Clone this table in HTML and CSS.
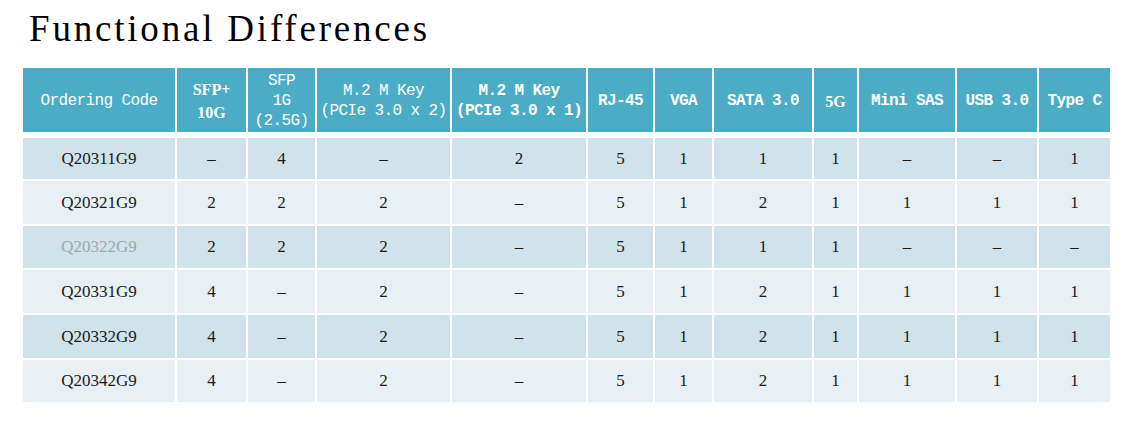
FILE: index.html
```html
<!DOCTYPE html>
<html>
<head>
<meta charset="utf-8">
<link rel="stylesheet" href="styles.css">
</head>
<body>
<h1 class="title">Functional Differences</h1>
<table class="spec">
  <colgroup>
    <col style="width:152px"><col style="width:69px"><col style="width:67px"><col style="width:133px"><col style="width:134px"><col style="width:65px"><col style="width:57px"><col style="width:98px"><col style="width:43px"><col style="width:96px"><col style="width:80px"><col style="width:71px">
  </colgroup>
  <thead>
    <tr>
      <th>Ordering Code</th>
      <th class="tb">SFP+<br>10G</th>
      <th>SFP<br>1G<br>(2.5G)</th>
      <th>M.2 M Key<br>(PCIe 3.0 x 2)</th>
      <th class="mb">M.2 M Key<br>(PCIe 3.0 x 1)</th>
      <th class="mb">RJ-45</th>
      <th class="mb">VGA</th>
      <th class="mb">SATA 3.0</th>
      <th class="tb">5G</th>
      <th class="mb">Mini SAS</th>
      <th class="mb">USB 3.0</th>
      <th class="mb">Type C</th>
    </tr>
  </thead>
  <tbody>
    <tr><td>Q20311G9</td><td>–</td><td>4</td><td>–</td><td>2</td><td>5</td><td>1</td><td>1</td><td>1</td><td>–</td><td>–</td><td>1</td></tr>
    <tr><td>Q20321G9</td><td>2</td><td>2</td><td>2</td><td>–</td><td>5</td><td>1</td><td>2</td><td>1</td><td>1</td><td>1</td><td>1</td></tr>
    <tr><td class="muted">Q20322G9</td><td>2</td><td>2</td><td>2</td><td>–</td><td>5</td><td>1</td><td>1</td><td>1</td><td>–</td><td>–</td><td>–</td></tr>
    <tr><td>Q20331G9</td><td>4</td><td>–</td><td>2</td><td>–</td><td>5</td><td>1</td><td>2</td><td>1</td><td>1</td><td>1</td><td>1</td></tr>
    <tr><td>Q20332G9</td><td>4</td><td>–</td><td>2</td><td>–</td><td>5</td><td>1</td><td>2</td><td>1</td><td>1</td><td>1</td><td>1</td></tr>
    <tr><td>Q20342G9</td><td>4</td><td>–</td><td>2</td><td>–</td><td>5</td><td>1</td><td>2</td><td>1</td><td>1</td><td>1</td><td>1</td></tr>
  </tbody>
</table>
</body>
</html>
```
FILE: styles.css
```css
html, body {
  margin: 0;
  padding: 0;
  background: #ffffff;
}
body {
  font-family: "Liberation Serif", serif;
  color: #111;
}
.title {
  margin: 0;
  padding: 9px 0 0 29px;
  height: 66px;
  box-sizing: border-box;
  font-family: "Liberation Serif", serif;
  font-weight: normal;
  font-size: 37px;
  line-height: 40px;
  letter-spacing: 2.8px;
  color: #000;
}
.spec {
  margin-left: 21px;
  border-collapse: separate;
  border-spacing: 2px;
  table-layout: fixed;
  width: 1091px;
}
.spec th {
  background: #4bacc6;
  color: #fff;
  font-family: "Liberation Mono", monospace;
  font-weight: normal;
  font-size: 16px;
  letter-spacing: -0.6px;
  line-height: 20px;
  height: 62px;
  padding: 2px 0 0;
  text-align: center;
  vertical-align: middle;
  border-bottom: 4px solid #fff;
  white-space: nowrap;
}
.spec th.mb {
  font-weight: bold;
}
.spec th.tb {
  font-family: "Liberation Serif", serif;
  font-weight: bold;
  font-size: 16px;
  letter-spacing: 0;
  line-height: 23px;
}
.spec td {
  padding: 0;
  text-align: center;
  vertical-align: middle;
  font-size: 17px;
  color: #1a1a1a;
  height: 42px;
}
.spec tbody tr:nth-child(odd) td {
  background: #d0e3ea;
}
.spec tbody tr:nth-child(even) td {
  background: #e8f0f5;
}
.spec tbody tr:nth-child(1) td { height: 41px; }
.spec tbody tr:nth-child(2) td { height: 43px; }
.spec tbody tr:nth-child(4) td { height: 43px; }
.spec tbody tr:nth-child(5) td { height: 43px; }
.spec td.muted {
  color: #a6a6a6;
}
```
